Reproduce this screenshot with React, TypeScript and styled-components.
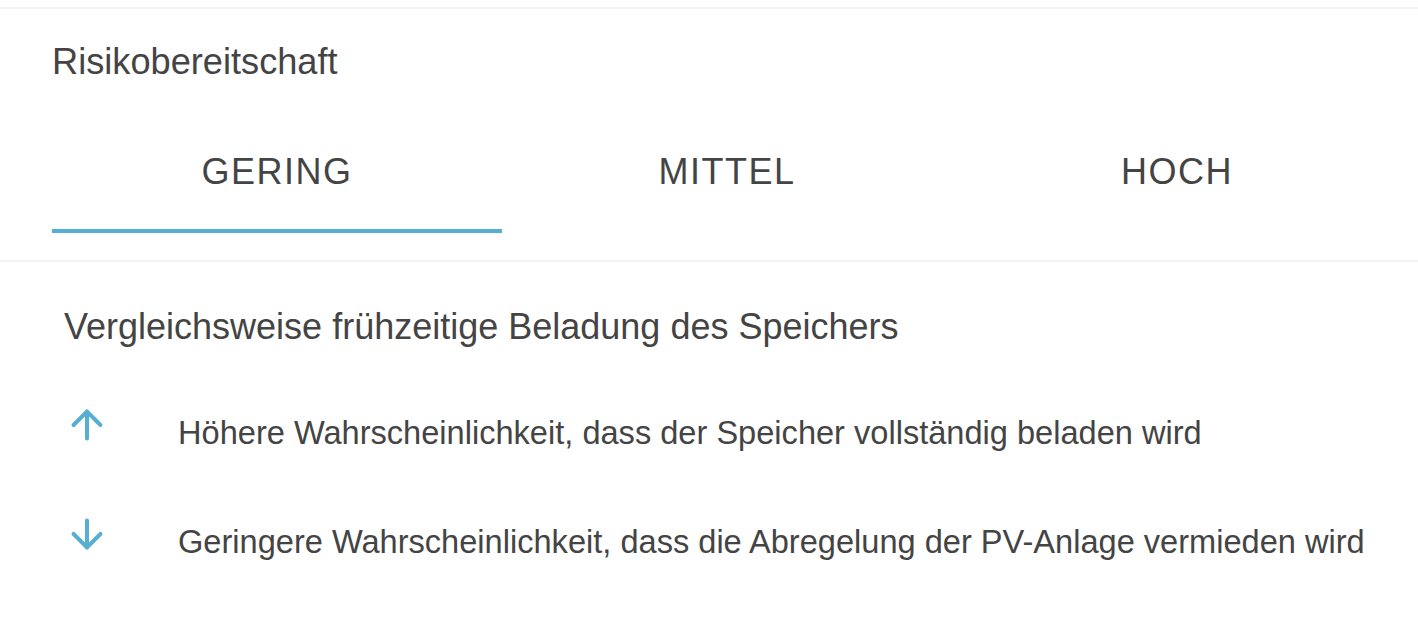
import React, { useState } from "react";
import styled, { createGlobalStyle } from "styled-components";
import { ArrowUp, ArrowDown } from "lucide-react";

const GlobalStyle = createGlobalStyle`
  html, body {
    margin: 0;
    padding: 0;
    background: #ffffff;
  }
  body {
    font-family: "Liberation Sans", Arial, Helvetica, sans-serif;
    color: #444444;
    -webkit-font-smoothing: antialiased;
  }
`;

const Page = styled.div`
  width: 1418px;
  min-height: 618px;
  background: #ffffff;
`;

const Rule = styled.div<{ $top: number }>`
  margin-top: ${(p) => p.$top}px;
  height: 2px;
  background: #f3f3f3;
`;

const Header = styled.section`
  padding: 33px 16px 0 52px;
`;

const Title = styled.h2`
  margin: 0;
  font-size: 36.2px;
  line-height: 40px;
  font-weight: 400;
  color: #444444;
`;

const TabList = styled.div`
  display: flex;
  margin-top: 70px;
`;

const Tab = styled.button<{ $active: boolean }>`
  flex: 1;
  margin: 0;
  padding: 0 0 37px;
  border: none;
  border-bottom: 4px solid ${(p) => (p.$active ? "#57aed3" : "transparent")};
  background: transparent;
  font-family: inherit;
  font-size: 36px;
  line-height: 40px;
  letter-spacing: 1.5px;
  text-transform: uppercase;
  color: #444444;
  cursor: pointer;
`;

const Content = styled.section`
  padding: 45px 16px 0 64px;
`;

const Subtitle = styled.p`
  margin: 0;
  font-size: 36px;
  line-height: 40px;
  color: #444444;
`;

const List = styled.ul`
  list-style: none;
  margin: 55px 0 0;
  padding: 0;
  display: flex;
  flex-direction: column;
  gap: 58px;
`;

const Item = styled.li`
  display: flex;
  align-items: flex-start;
  gap: 68px;
`;

const IconBox = styled.span`
  display: flex;
  width: 46px;
  height: 46px;
  color: #57aed3;
  flex-shrink: 0;
`;

const ItemText = styled.span`
  padding-top: 11px;
  font-size: 32.6px;
  line-height: 40px;
  color: #444444;
`;

const tabs = ["Gering", "Mittel", "Hoch"];

export default function App() {
  const [active, setActive] = useState(0);
  return (
    <Page>
      <GlobalStyle />
      <Rule $top={7} />
      <Header>
        <Title>Risikobereitschaft</Title>
        <TabList>
          {tabs.map((t, i) => (
            <Tab key={t} $active={i === active} onClick={() => setActive(i)}>
              {t}
            </Tab>
          ))}
        </TabList>
      </Header>
      <Rule $top={27} />
      <Content>
        <Subtitle>Vergleichsweise frühzeitige Beladung des Speichers</Subtitle>
        <List>
          <Item>
            <IconBox>
              <ArrowUp size={46} strokeWidth={2.1} />
            </IconBox>
            <ItemText>Höhere Wahrscheinlichkeit, dass der Speicher vollständig beladen wird</ItemText>
          </Item>
          <Item>
            <IconBox>
              <ArrowDown size={46} strokeWidth={2.1} />
            </IconBox>
            <ItemText>Geringere Wahrscheinlichkeit, dass die Abregelung der PV-Anlage vermieden wird</ItemText>
          </Item>
        </List>
      </Content>
    </Page>
  );
}
